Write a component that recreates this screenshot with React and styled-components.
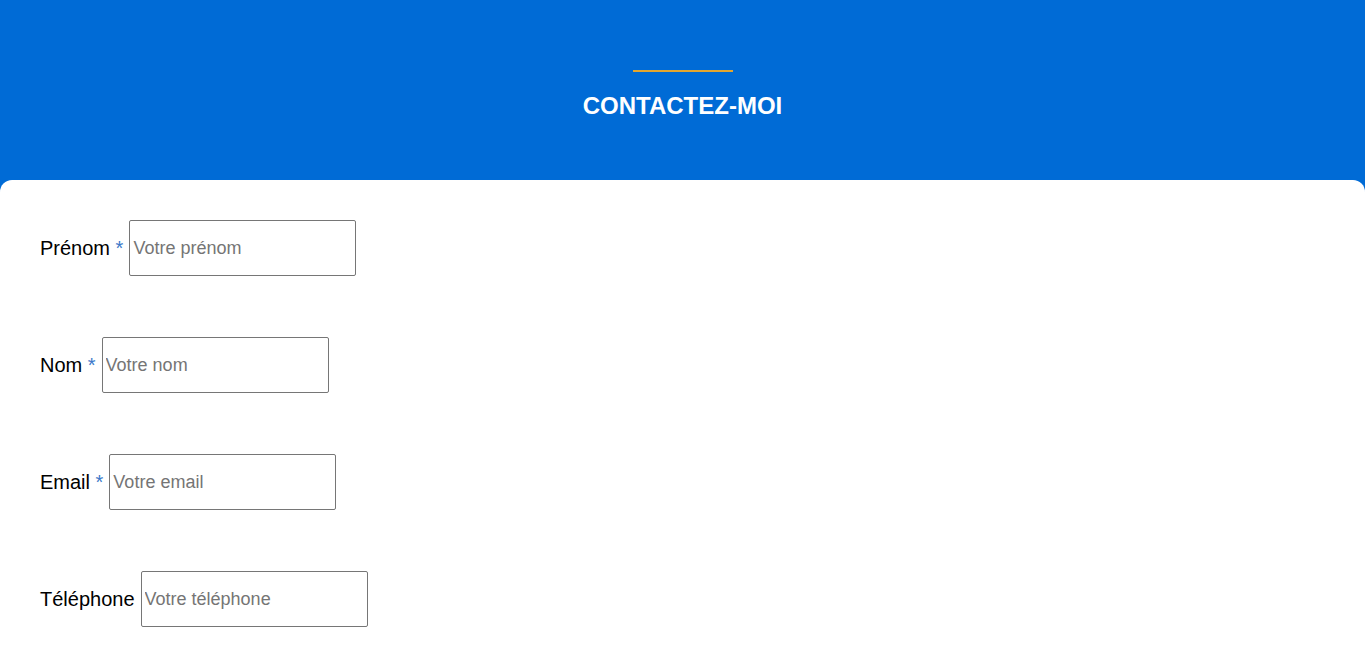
import React from "react";
import styled, { createGlobalStyle } from "styled-components";

const GlobalStyle = createGlobalStyle`
  html, body {
    margin: 0;
    padding: 0;
    background: #006bd6;
    font-family: "Liberation Sans", Arial, sans-serif;
  }
  html {
    overflow-y: scroll;
  }
  ::-webkit-scrollbar {
    width: 15px;
    background: #f1f1f1;
  }
  ::-webkit-scrollbar-thumb {
    background: #c1c1c1;
    border: 2px solid #f1f1f1;
    border-left-width: 1px;
    border-right-width: 1px;
  }
`;

const Header = styled.header`
  height: 180px;
  background: #006bd6;
  display: flex;
  flex-direction: column;
  align-items: center;
`;

const Accent = styled.div`
  width: 100px;
  height: 2px;
  background: #e3a62f;
  margin-top: 70px;
`;

const Title = styled.h1`
  margin: 20px 0 0;
  color: #ffffff;
  font-size: 24px;
  font-weight: bold;
`;

const Card = styled.main`
  background: #ffffff;
  border-radius: 12px 12px 0 0;
  padding: 40px 40px 80px;
  min-height: 600px;
`;

const Form = styled.form`
  display: flex;
  flex-direction: column;
  gap: 61px;
`;

const Field = styled.div`
  display: flex;
  align-items: center;
  font-size: 20px;
  color: #000000;
`;

const Label = styled.label`
  margin-right: 6px;
`;

const Star = styled.span`
  color: #3b78c9;
`;

const Input = styled.input`
  box-sizing: border-box;
  width: 227px;
  height: 56px;
  border: 1px solid #767676;
  border-radius: 2px;
  padding: 0 3px;
  font-family: "Liberation Sans", Arial, sans-serif;
  font-size: 18px;
  color: #000;
  &::placeholder {
    color: #757575;
  }
`;

const TextArea = styled.textarea`
  box-sizing: border-box;
  width: 400px;
  height: 120px;
  border: 1px solid #767676;
  border-radius: 2px;
  padding: 3px;
  font-family: "Liberation Sans", Arial, sans-serif;
  font-size: 18px;
  &::placeholder {
    color: #757575;
  }
`;

const Submit = styled.button`
  align-self: flex-start;
  background: #006bd6;
  color: #fff;
  border: none;
  border-radius: 4px;
  padding: 14px 28px;
  font-family: "Liberation Sans", Arial, sans-serif;
  font-size: 18px;
  font-weight: bold;
`;

const fields = [
  { id: "prenom", label: "Prénom", placeholder: "Votre prénom", required: true },
  { id: "nom", label: "Nom", placeholder: "Votre nom", required: true },
  { id: "email", label: "Email", placeholder: "Votre email", required: true },
  { id: "tel", label: "Téléphone", placeholder: "Votre téléphone", required: false },
];

const App = () => {
  return (
    <>
      <GlobalStyle />
      <Header>
        <Accent />
        <Title>CONTACTEZ-MOI</Title>
      </Header>
      <Card>
        <Form onSubmit={(e) => e.preventDefault()}>
          {fields.map((f) => (
            <Field key={f.id}>
              <Label htmlFor={f.id}>
                {f.label}
                {f.required && <Star> *</Star>}
              </Label>
              <Input id={f.id} placeholder={f.placeholder} />
            </Field>
          ))}
          <Field>
            <Label htmlFor="message">
              Message<Star> *</Star>
            </Label>
            <TextArea id="message" placeholder="Votre message" />
          </Field>
          <Submit type="submit">Envoyer</Submit>
        </Form>
      </Card>
    </>
  );
};

export default App;
